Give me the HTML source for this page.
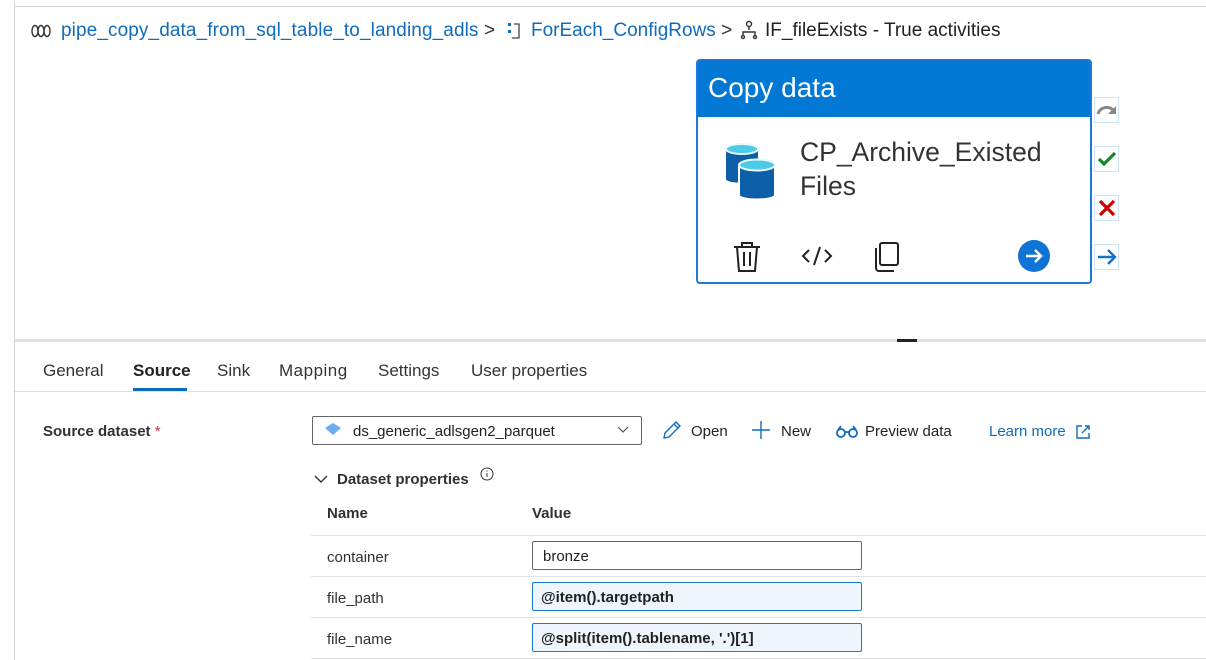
<!DOCTYPE html>
<html><head><meta charset="utf-8"><style>
*{margin:0;padding:0;box-sizing:border-box}
body{width:1206px;height:660px;overflow:hidden;background:#fff;font-family:"Liberation Sans",sans-serif;color:#323130;position:relative}
.a{position:absolute;white-space:nowrap}
.lnk{color:#0f6cbd}
</style></head><body>
<div class="a" style="left:14px;top:0;width:1px;height:660px;background:#d6d6d6"></div>
<div class="a" style="left:14px;top:6px;width:1192px;height:1px;background:#d6d6d6"></div>

<!-- breadcrumb -->
<svg class="a" style="left:30px;top:24px" width="22" height="14" viewBox="0 0 22 14"><g fill="none" stroke="#333" stroke-width="1.4"><ellipse cx="5" cy="7" rx="3" ry="5.5"/><ellipse cx="11" cy="7" rx="3" ry="5.5"/><ellipse cx="17" cy="7" rx="3" ry="5.5"/></g></svg>
<div class="a" style="left:61px;top:20px;font-size:19px;letter-spacing:0.1px"><span class="lnk">pipe_copy_data_from_sql_table_to_landing_adls</span> <span style="color:#333">&gt;</span></div>
<svg class="a" style="left:507px;top:22px" width="14" height="18" viewBox="0 0 14 18"><g fill="#0f6cbd"><rect x="1" y="1" width="3" height="3"/><rect x="1" y="8" width="3" height="3"/></g><path d="M7 2h5v14H5" fill="none" stroke="#444" stroke-width="1.3"/></svg>
<div class="a" style="left:531px;top:20px;font-size:19px"><span class="lnk">ForEach_ConfigRows</span> <span style="color:#333">&gt;</span></div>
<svg class="a" style="left:739px;top:20px" width="20" height="20" viewBox="0 0 20 20"><g fill="none" stroke="#333" stroke-width="1.4"><circle cx="10" cy="4" r="2.5"/><path d="M10 7v3M4 16v-4h12v4"/><circle cx="4" cy="17" r="1.5"/><circle cx="16" cy="17" r="1.5"/></g></svg>
<div class="a" style="left:765px;top:20px;font-size:19px;color:#222">IF_fileExists - True activities</div>

<!-- activity card -->
<div class="a" style="left:696px;top:59px;width:396px;height:225px;border:2px solid #1a7ad4;border-radius:4px;background:#fff;overflow:hidden">
 <div style="height:56px;background:#0078d4;color:#fff;font-size:28px;padding:11px 0 0 10px">Copy data</div>
 <svg class="a" style="left:27px;top:80px" width="52" height="60" viewBox="0 0 52 60"><path d="M1 8v30c0 5 32 5 32 0V8z" fill="#0c5ea8"/><ellipse cx="17" cy="8" rx="16" ry="5" fill="#4ccbe6" stroke="#e8f7fc" stroke-width="2"/><path d="M14 24v30c0 6 36 6 36 0V24z" fill="#0c5ea8" stroke="#fff" stroke-width="2"/><ellipse cx="32" cy="24" rx="18" ry="5.5" fill="#4ccbe6" stroke="#e8f7fc" stroke-width="2"/></svg>
 <div class="a" style="left:102px;top:74px;font-size:26.5px;line-height:34px;color:#333">CP_Archive_Existed<br>Files</div>
 <svg class="a" style="left:34px;top:180px" width="30" height="32" viewBox="0 0 30 32"><g fill="none" stroke="#222" stroke-width="2"><path d="M2 6h26M10 6V2h10v4M5 6l2 24h16l2-24M12 11v14M18 11v14"/></g></svg>
 <svg class="a" style="left:103px;top:184px" width="32" height="22" viewBox="0 0 32 22"><g fill="none" stroke="#222" stroke-width="2"><path d="M8 5l-6 6 6 6M24 5l6 6-6 6M19 2l-6 18"/></g></svg>
 <svg class="a" style="left:174px;top:180px" width="30" height="32" viewBox="0 0 30 32"><g fill="none" stroke="#222" stroke-width="2"><rect x="8" y="2" width="18" height="22" rx="2"/><path d="M4 7v20a3 3 0 003 3h15"/></g></svg>
 <svg class="a" style="left:319px;top:178px" width="34" height="34" viewBox="0 0 34 34"><circle cx="17" cy="17" r="16" fill="#0f74d6"/><path d="M9 17h15M18 11l6 6-6 6" fill="none" stroke="#fff" stroke-width="2.4"/></svg>
</div>
<!-- side buttons -->
<div class="a" style="left:1094px;top:97px;width:25px;height:26px;border:1px solid #cfe3f7;background:#fff"><svg width="24" height="24" viewBox="0 0 24 24"><path d="M3 16c2-7 11-9 16-3" fill="none" stroke="#888" stroke-width="3"/><path d="M21 8v8h-8z" fill="#888"/></svg></div>
<div class="a" style="left:1094px;top:146px;width:25px;height:26px;border:1px solid #cfe3f7;background:#fff"><svg width="24" height="24" viewBox="0 0 24 24"><path d="M4 12l5 5 11-11" fill="none" stroke="#138a23" stroke-width="3.2"/></svg></div>
<div class="a" style="left:1094px;top:195px;width:25px;height:26px;border:1px solid #cfe3f7;background:#fff"><svg width="24" height="24" viewBox="0 0 24 24"><path d="M5 5l14 14M19 5L5 19" fill="none" stroke="#c00" stroke-width="3.2"/></svg></div>
<div class="a" style="left:1094px;top:244px;width:25px;height:26px;border:1px solid #cfe3f7;background:#fff"><svg width="24" height="24" viewBox="0 0 24 24"><path d="M3 12h17M13 5l7 7-7 7" fill="none" stroke="#1570c8" stroke-width="2.4"/></svg></div>

<!-- splitter -->
<div class="a" style="left:15px;top:339px;width:1191px;height:3px;background:#e1e1e1"></div>
<div class="a" style="left:897px;top:339px;width:20px;height:3px;background:#222"></div>

<!-- tabs -->
<div class="a" style="left:43px;top:361px;font-size:17px;color:#333">General</div>
<div class="a" style="left:133px;top:361px;font-size:17px;font-weight:bold;color:#222">Source</div>
<div class="a" style="left:133px;top:388px;width:54px;height:3px;background:#0f6cbd"></div>
<div class="a" style="left:217px;top:361px;font-size:17px;color:#333">Sink</div>
<div class="a" style="left:279px;top:361px;font-size:17px;color:#333;letter-spacing:0.5px">Mapping</div>
<div class="a" style="left:378px;top:361px;font-size:17px;color:#333">Settings</div>
<div class="a" style="left:471px;top:361px;font-size:17px;color:#333">User properties</div>
<div class="a" style="left:15px;top:391px;width:1191px;height:1px;background:#e0e0e0"></div>

<!-- source dataset row -->
<div class="a" style="left:43px;top:423px;font-size:15px;font-weight:bold;color:#323130">Source dataset <span style="color:#c4314b;font-weight:normal">*</span></div>
<div class="a" style="left:312px;top:416px;width:330px;height:29px;border:1px solid #666;border-radius:2px"></div>
<svg class="a" style="left:325px;top:423px" width="16" height="12" viewBox="0 0 16 12"><path d="M8 0l8 5-8 7-8-7z" fill="#6aaef0"/></svg>
<div class="a" style="left:353px;top:423px;font-size:15px;color:#222">ds_generic_adlsgen2_parquet</div>
<svg class="a" style="left:617px;top:426px" width="12" height="8" viewBox="0 0 12 8"><path d="M1 1l5 5 5-5" fill="none" stroke="#555" stroke-width="1.2"/></svg>
<svg class="a" style="left:662px;top:420px" width="20" height="20" viewBox="0 0 20 20"><path d="M2 18l1-5L14 2l4 4L7 17zM12 4l4 4" fill="none" stroke="#0f6cbd" stroke-width="1.4"/></svg>
<div class="a" style="left:691px;top:423px;font-size:15px;color:#222">Open</div>
<svg class="a" style="left:751px;top:420px" width="20" height="20" viewBox="0 0 20 20"><path d="M10 1v18M1 10h18" fill="none" stroke="#0f6cbd" stroke-width="1.4"/></svg>
<div class="a" style="left:781px;top:423px;font-size:15px;color:#222">New</div>
<svg class="a" style="left:836px;top:424px" width="22" height="14" viewBox="0 0 22 14"><g fill="none" stroke="#0f6cbd" stroke-width="1.8"><circle cx="5" cy="9" r="4"/><circle cx="17" cy="9" r="4"/><path d="M9 8h4M2 6l3-4M20 6l-3-4"/></g></svg>
<div class="a" style="left:865px;top:423px;font-size:15px;color:#222">Preview data</div>
<div class="a" style="left:989px;top:423px;font-size:15px;color:#0f6cbd">Learn more</div>
<svg class="a" style="left:1075px;top:424px" width="16" height="16" viewBox="0 0 16 16"><path d="M7 2H2v12h12V9M10 2h4v4M14 2L7 9" fill="none" stroke="#0f6cbd" stroke-width="1.4"/></svg>

<!-- dataset properties -->
<svg class="a" style="left:314px;top:474px" width="14" height="10" viewBox="0 0 14 10"><path d="M1 2l6 6 6-6" fill="none" stroke="#333" stroke-width="1.4"/></svg>
<div class="a" style="left:337px;top:471px;font-size:15px;font-weight:bold;color:#323130">Dataset properties</div>
<svg class="a" style="left:480px;top:467px" width="14" height="14" viewBox="0 0 14 14"><circle cx="7" cy="7" r="6" fill="none" stroke="#333"/><path d="M7 6v4M7 3.5v1" stroke="#333"/></svg>
<div class="a" style="left:327px;top:505px;font-size:15px;font-weight:bold;color:#323130">Name</div>
<div class="a" style="left:532px;top:505px;font-size:15px;font-weight:bold;color:#323130">Value</div>
<div class="a" style="left:311px;top:535px;width:895px;height:1px;background:#e1e1e1"></div>
<div class="a" style="left:327px;top:549px;font-size:15px">container</div>
<div class="a" style="left:532px;top:541px;width:330px;height:29px;border:1px solid #666;border-radius:2px;font-size:15px;padding:6px 10px;color:#222">bronze</div>
<div class="a" style="left:311px;top:576px;width:895px;height:1px;background:#e1e1e1"></div>
<div class="a" style="left:327px;top:590px;font-size:15px">file_path</div>
<div class="a" style="left:532px;top:582px;width:330px;height:29px;border:1px solid #1a7ad4;border-radius:2px;background:#eef5fc;font-size:15px;font-weight:bold;padding:6px 8px;color:#222">@item().targetpath</div>
<div class="a" style="left:311px;top:617px;width:895px;height:1px;background:#e1e1e1"></div>
<div class="a" style="left:327px;top:631px;font-size:15px">file_name</div>
<div class="a" style="left:532px;top:623px;width:330px;height:29px;border:1px solid #1a7ad4;border-radius:2px;background:#eef5fc;font-size:15px;font-weight:bold;padding:6px 8px;color:#222">@split(item().tablename, '.')[1]</div>
<div class="a" style="left:311px;top:658px;width:895px;height:1px;background:#e1e1e1"></div>
</body></html>
